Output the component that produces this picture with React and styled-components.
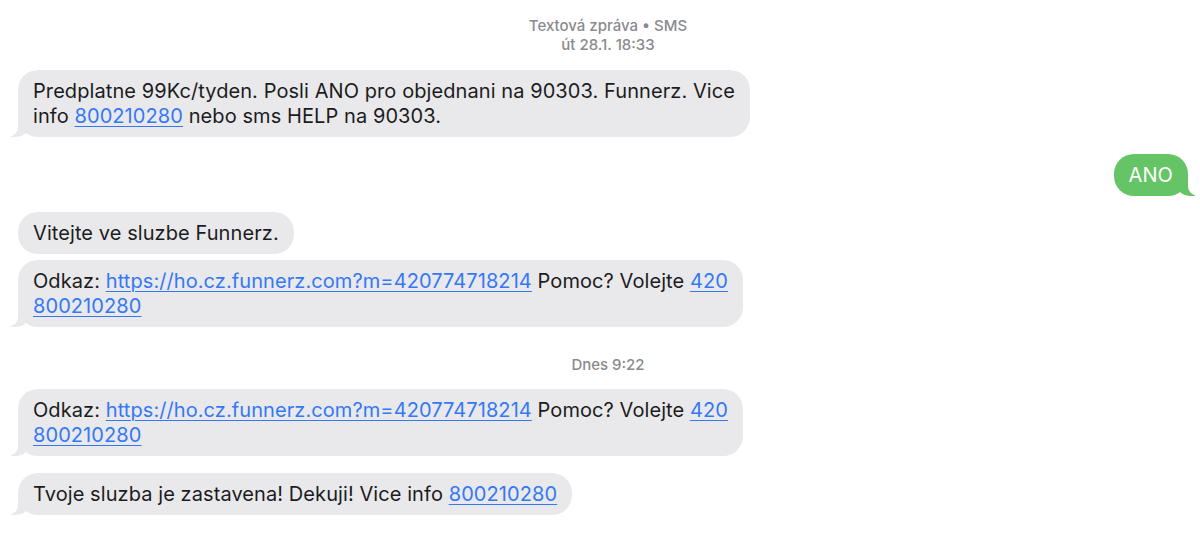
import React from "react";
import styled, { createGlobalStyle, css } from "styled-components";

const GlobalStyle = createGlobalStyle`
  html, body { margin: 0; padding: 0; background: #ffffff; }
  body { font-family: Inter, "Liberation Sans", Arial, sans-serif; -webkit-font-smoothing: antialiased; }
`;

const GRAY = "#e9e9eb";
const GREEN = "#65c466";

const Thread = styled.main`
  display: flex;
  flex-direction: column;
  padding: 16px 12px 20px 18px;
`;

const Stamp = styled.div`
  align-self: center;
  padding-left: 10px;
  text-align: center;
  font-size: 15px;
  line-height: 19px;
  font-weight: 500;
  color: #8a8a8e;
  margin-top: ${(p) => p.$top || 0}px;
  margin-bottom: ${(p) => p.$bottom || 0}px;
`;

// lines are broken where the phone broke them, so the bubble hugs its longest line
const Bubble = styled.div`
  position: relative;
  box-sizing: border-box;
  max-width: 780px;
  padding: 8.5px 15px;
  border-radius: 20px;
  font-size: 20px;
  line-height: 25px;
  letter-spacing: 0.08px;
  color: #1c1c1e;
  background: ${GRAY};
  align-self: flex-start;
  margin-top: ${(p) => p.$gap || 0}px;

  ${(p) =>
    p.$sent &&
    css`
      align-self: flex-end;
      background: ${GREEN};
      color: #ffffff;
    `}

  ${(p) =>
    p.$tail &&
    !p.$sent &&
    css`
      &::before {
        content: "";
        position: absolute;
        bottom: 0;
        left: -7px;
        width: 20px;
        height: 20px;
        background: ${GRAY};
        border-bottom-right-radius: 15px;
      }
      &::after {
        content: "";
        position: absolute;
        bottom: 0;
        left: -10px;
        width: 10px;
        height: 20px;
        background: #ffffff;
        border-bottom-right-radius: 10px;
      }
    `}

  ${(p) =>
    p.$tail &&
    p.$sent &&
    css`
      &::before {
        content: "";
        position: absolute;
        bottom: 0;
        right: -7px;
        width: 20px;
        height: 20px;
        background: ${GREEN};
        border-bottom-left-radius: 15px;
      }
      &::after {
        content: "";
        position: absolute;
        bottom: 0;
        right: -10px;
        width: 10px;
        height: 20px;
        background: #ffffff;
        border-bottom-left-radius: 10px;
      }
    `}
`;

const Link = styled.a`
  color: #3478f6;
  text-decoration: underline;
  text-underline-offset: 3px;
  text-decoration-thickness: 1px;
`;

const Odkaz = () => (
  <>
    Odkaz: <Link href="#">https://ho.cz.funnerz.com?m=420774718214</Link> Pomoc? Volejte{" "}
    <Link href="#">420</Link>
    <br />
    <Link href="#">800210280</Link>
  </>
);

const App = () => (
  <>
    <GlobalStyle />
    <Thread>
      <Stamp>
        Textová zpráva • SMS
        <br />
        út 28.1. 18:33
      </Stamp>

      <Bubble $tail $gap={16}>
        Predplatne 99Kc/tyden. Posli ANO pro objednani na 90303. Funnerz. Vice
        <br />
        info <Link href="#">800210280</Link> nebo sms HELP na 90303.
      </Bubble>

      <Bubble $sent $tail $gap={17}>ANO</Bubble>

      <Bubble $gap={16}>Vitejte ve sluzbe Funnerz.</Bubble>
      <Bubble $tail $gap={6}>
        <Odkaz />
      </Bubble>

      <Stamp $top={28} $bottom={15}>Dnes 9:22</Stamp>

      <Bubble $tail>
        <Odkaz />
      </Bubble>
      <Bubble $tail $gap={17}>
        Tvoje sluzba je zastavena! Dekuji! Vice info <Link href="#">800210280</Link>
      </Bubble>
    </Thread>
  </>
);

export default App;
